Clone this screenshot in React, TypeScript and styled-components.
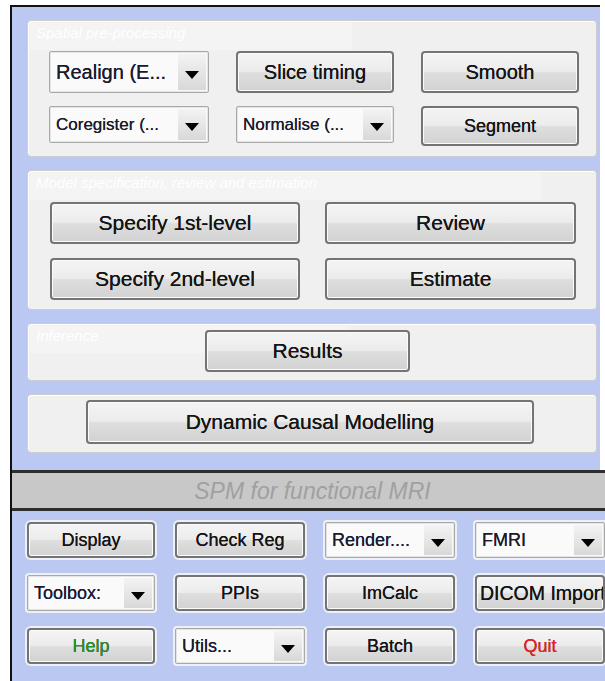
import React from 'react';
import styled, { createGlobalStyle } from 'styled-components';

const GlobalStyle = createGlobalStyle`
  html, body {
    margin: 0;
    padding: 0;
    background: #fff;
  }
  body {
    font-family: "Liberation Sans", Arial, sans-serif;
  }
`;

const BLUE = '#BBC8F1';

const Figure = styled.div`
  width: 605px;
  height: 681px;
  overflow: hidden;
`;

const MenuWindow = styled.div`
  margin: 5px 5px 0 10px;
  border-top: 2px solid #111;
  border-left: 2px solid #111;
  background: ${BLUE};
  padding: 13px 3px 17px 15px;
  display: flex;
  flex-direction: column;
  gap: 13px;
`;

const Panel = styled.div<{ $pad: string }>`
  position: relative;
  background: #f0f0f0;
  border: 1px solid #cdcdcd;
  border-radius: 4px;
  box-shadow: inset 1px 1px 0 #fff;
  padding: ${p => p.$pad};
`;

const PanelTitle = styled.div<{ $width: number }>`
  position: absolute;
  top: 2px;
  left: 2px;
  width: ${p => p.$width}px;
  height: 27px;
  background: #f4f4f4;
  color: #fff;
  font-size: 15px;
  font-style: italic;
  line-height: 20px;
  padding-left: 6px;
  box-sizing: border-box;
  white-space: nowrap;
  overflow: hidden;
`;

const ControlGrid = styled.div<{ $cols: string; $rows: string; $colGap: number; $rowGap: number }>`
  position: relative;
  display: grid;
  grid-template-columns: ${p => p.$cols};
  grid-template-rows: ${p => p.$rows};
  column-gap: ${p => p.$colGap}px;
  row-gap: ${p => p.$rowGap}px;
`;

const CenterRow = styled.div<{ $shift?: number }>`
  position: relative;
  display: flex;
  justify-content: center;
  padding-right: ${p => p.$shift ?? 0}px;
`;

const PushButton = styled.button<{ $size: number; $color?: string; $width?: number; $height?: number; $halo?: boolean; $clip?: boolean }>`
  font-family: "Liberation Sans", Arial, sans-serif;
  font-size: ${p => p.$size}px;
  color: ${p => p.$color ?? '#141414'};
  width: ${p => (p.$width ? `${p.$width}px` : '100%')};
  height: ${p => (p.$height ? `${p.$height}px` : '100%')};
  padding: ${p => (p.$clip ? '0 0 0 3px' : '0')};
  text-align: ${p => (p.$clip ? 'left' : 'center')};
  border: 2px solid #747474;
  border-radius: 4px;
  background: linear-gradient(#f4f4f4 0%, #ececec 48%, #dedede 52%, #d2d2d2 100%);
  box-shadow: inset 0 0 0 1px #fbfbfb${p => (p.$halo ? ', 0 0 0 2px #eef0f8' : '')};
  white-space: nowrap;
  overflow: hidden;
  text-shadow: 0 0 0.4px #141414;
`;

const Popup = styled.div<{ $size: number; $height?: number; $halo?: boolean }>`
  display: flex;
  align-items: stretch;
  height: ${p => (p.$height ? `${p.$height}px` : '100%')};
  box-sizing: border-box;
  border: 1px solid #a9a9a9;
  border-radius: 2px;
  background: #fafafa;
  box-shadow: inset 0 0 0 1px #e4e4e4${p => (p.$halo ? ', 0 0 0 2px #eef0f8' : '')};
  font-size: ${p => p.$size}px;
  color: #1b1b2e;
`;

const PopupText = styled.div`
  flex: 1;
  display: flex;
  align-items: center;
  padding-left: 6px;
  white-space: nowrap;
  overflow: hidden;
  text-shadow: 0 0 0.4px #1b1b2e;
`;

const PopupArrow = styled.div`
  width: 28px;
  margin: 2px 2px 2px 0;
  background: linear-gradient(#f3f3f3 0%, #e6e6e6 50%, #d8d8d8 100%);
  display: flex;
  align-items: center;
  justify-content: center;
  padding-top: 5px;
`;

const TitleBand = styled.div`
  margin-left: 10px;
  border-left: 2px solid #111;
`;

const BandLabel = styled.div`
  height: 35px;
  border-top: 3px solid #2e2e2e;
  border-bottom: 3px solid #2e2e2e;
  background: #c8c8c8;
  color: #a0a0a0;
  font-size: 23px;
  font-style: italic;
  line-height: 37px;
  text-align: center;
  padding-left: 8px;
`;

const Toolbar = styled.div`
  margin-left: 10px;
  border-left: 2px solid #111;
  background: ${BLUE};
  padding: 11px 0 17px 15px;
  display: grid;
  grid-template-columns: 128px 130px 130px 130px;
  grid-template-rows: 36px 36px 36px;
  column-gap: 20px;
  row-gap: 17px;
`;

const Arrow = () => (
  <svg width="14" height="8" viewBox="0 0 14 8">
    <path d="M0 0 H14 L7 8 Z" fill="#000" />
  </svg>
);

type DropProps = {
  label: string;
  size: number;
  height?: number;
  halo?: boolean;
};

const Dropdown: React.FC<DropProps> = ({ label, size, height, halo }) => (
  <Popup $size={size} $height={height} $halo={halo}>
    <PopupText>{label}</PopupText>
    <PopupArrow>
      <Arrow />
    </PopupArrow>
  </Popup>
);

export default function App() {
  return (
    <Figure>
      <GlobalStyle />
      <MenuWindow>
        <Panel $pad="30px 0 10px 21px">
          <PanelTitle $width={322}>Spatial pre-processing</PanelTitle>
          <ControlGrid $cols="160px 158px 158px" $rows="42px 40px" $colGap={27} $rowGap={13}>
            <Dropdown label="Realign (E..." size={20} />
            <PushButton $size={20}>Slice timing</PushButton>
            <PushButton $size={20}>Smooth</PushButton>
            <Dropdown label="Coregister (..." size={17} height={37} />
            <Dropdown label="Normalise (..." size={17} height={37} />
            <PushButton $size={18}>Segment</PushButton>
          </ControlGrid>
        </Panel>

        <Panel $pad="31px 0 9px 22px">
          <PanelTitle $width={511}>Model specification, review and estimation</PanelTitle>
          <ControlGrid $cols="250px 251px" $rows="42px 42px" $colGap={25} $rowGap={14}>
            <PushButton $size={21}>Specify 1st-level</PushButton>
            <PushButton $size={21}>Review</PushButton>
            <PushButton $size={21}>Specify 2nd-level</PushButton>
            <PushButton $size={21}>Estimate</PushButton>
          </ControlGrid>
        </Panel>

        <Panel $pad="6px 0 8px 0">
          <PanelTitle $width={320}>Inference</PanelTitle>
          <CenterRow $shift={9}>
            <PushButton $size={21} $width={205} $height={42}>Results</PushButton>
          </CenterRow>
        </Panel>

        <Panel $pad="5px 0 8px 0">
          <CenterRow $shift={4}>
            <PushButton $size={21} $width={448} $height={44}>Dynamic Causal Modelling</PushButton>
          </CenterRow>
        </Panel>
      </MenuWindow>

      <TitleBand>
        <BandLabel>SPM for functional MRI</BandLabel>
      </TitleBand>

      <Toolbar>
        <PushButton $size={18} $halo>Display</PushButton>
        <PushButton $size={18} $halo>Check Reg</PushButton>
        <Dropdown label="Render...." size={18} halo />
        <Dropdown label="FMRI" size={18} halo />

        <Dropdown label="Toolbox:" size={18} halo />
        <PushButton $size={18} $halo>PPIs</PushButton>
        <PushButton $size={18} $halo>ImCalc</PushButton>
        <PushButton $size={19.5} $halo $clip>DICOM Import</PushButton>

        <PushButton $size={18} $color="#1e9a1e" $halo>Help</PushButton>
        <Dropdown label="Utils..." size={18} halo />
        <PushButton $size={18} $halo>Batch</PushButton>
        <PushButton $size={18} $color="#ff1e1e" $halo>Quit</PushButton>
      </Toolbar>
    </Figure>
  );
}
